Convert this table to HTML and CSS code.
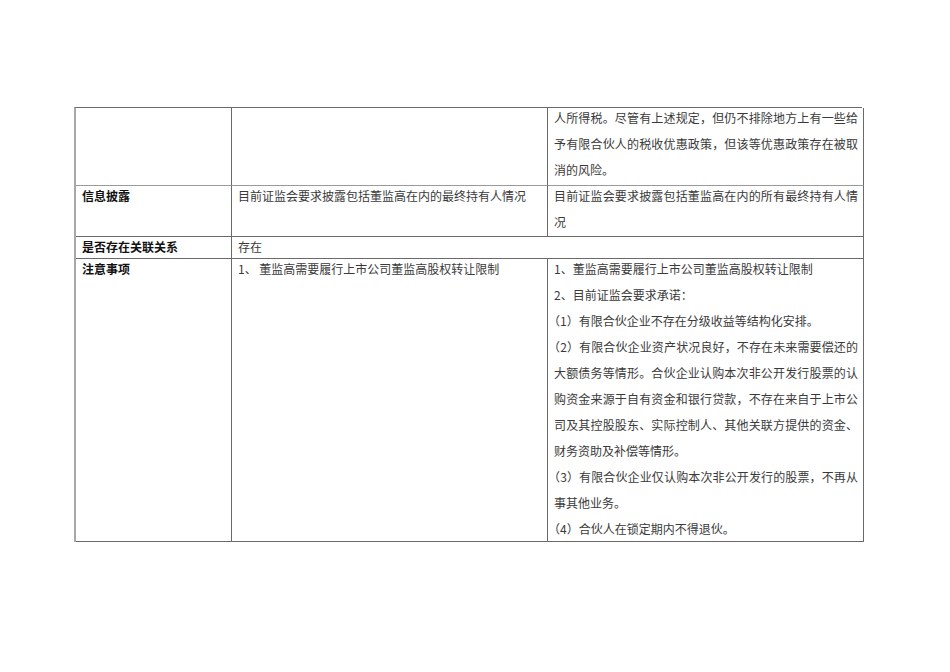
FILE: index.html
```html
<!DOCTYPE html>
<html lang="zh-CN">
<head>
<meta charset="utf-8">
<title>表格</title>
<link rel="stylesheet" href="styles.css">
</head>
<body>
<div class="page">
  <div class="sheet">
    <div class="cell r1"><div class="txt"></div></div>
    <div class="cell r1"><div class="txt"></div></div>
    <div class="cell r1 last"><div class="txt"><p>人所得税。尽管有上述规定，但仍不排除地方上有一些给予有限合伙人的税收优惠政策，但该等优惠政策存在被取消的风险。</p></div></div>

    <div class="cell r2 label"><div class="txt">信息披露</div></div>
    <div class="cell r2"><div class="txt">目前证监会要求披露包括董监高在内的最终持有人情况</div></div>
    <div class="cell r2 last"><div class="txt"><p>目前证监会要求披露包括董监高在内的所有最终持有人情况</p></div></div>

    <div class="cell r3 label"><div class="txt">是否存在关联关系</div></div>
    <div class="cell r3 span2"><div class="txt">存在</div></div>

    <div class="cell r4 label"><div class="txt">注意事项</div></div>
    <div class="cell r4"><div class="txt">1、 董监高需要履行上市公司董监高股权转让限制</div></div>
    <div class="cell r4 last"><div class="txt">
      <p>1、董监高需要履行上市公司董监高股权转让限制</p>
      <p>2、目前证监会要求承诺：</p>
      <p class="item">（1）有限合伙企业不存在分级收益等结构化安排。</p>
      <p class="item">（2）有限合伙企业资产状况良好，不存在未来需要偿还的大额债务等情形。合伙企业认购本次非公开发行股票的认购资金来源于自有资金和银行贷款，不存在来自于上市公司及其控股股东、实际控制人、其他关联方提供的资金、财务资助及补偿等情形。</p>
      <p class="item">（3）有限合伙企业仅认购本次非公开发行的股票，不再从事其他业务。</p>
      <p class="item">（4）合伙人在锁定期内不得退伙。</p>
    </div></div>
  </div>
</div>
</body>
</html>
```

FILE: styles.css
```css
html, body {
  margin: 0;
  padding: 0;
  background: #ffffff;
}

.page {
  padding: 107px 0 0 74px;
}

.sheet {
  display: grid;
  grid-template-columns: 156px 316px 316px;
  grid-template-rows: 78px 51px 22px 283px;
  width: 788px;
  border-top: 1px solid #6a6a6a;
  border-left: 2px solid #a8a8a8;
  box-sizing: border-box;
  font-family: "Noto Sans CJK SC", "Noto Sans", sans-serif;
  font-size: 12px;
  color: #3a3a3a;
}

.cell {
  box-sizing: border-box;
  border-right: 1px solid #6a6a6a;
  border-bottom: 1px solid #6a6a6a;
  padding: 0 6px;
  overflow: hidden;
}

.cell.r1 {
  border-bottom-color: #9a9a9a;
}

.cell.last {
  padding: 0 5px 0 6px;
}

.cell.span2 {
  grid-column: 2 / 4;
}

.txt {
  line-height: 26px;
  margin-top: -3px;
}

.r3 .txt {
  line-height: 22px;
  margin-top: -1px;
}

.label .txt {
  font-weight: bold;
  color: #111111;
}

.last p {
  margin: 0;
  text-align: justify;
}

.last p.item {
  text-spacing-trim: trim-start;
}
```
